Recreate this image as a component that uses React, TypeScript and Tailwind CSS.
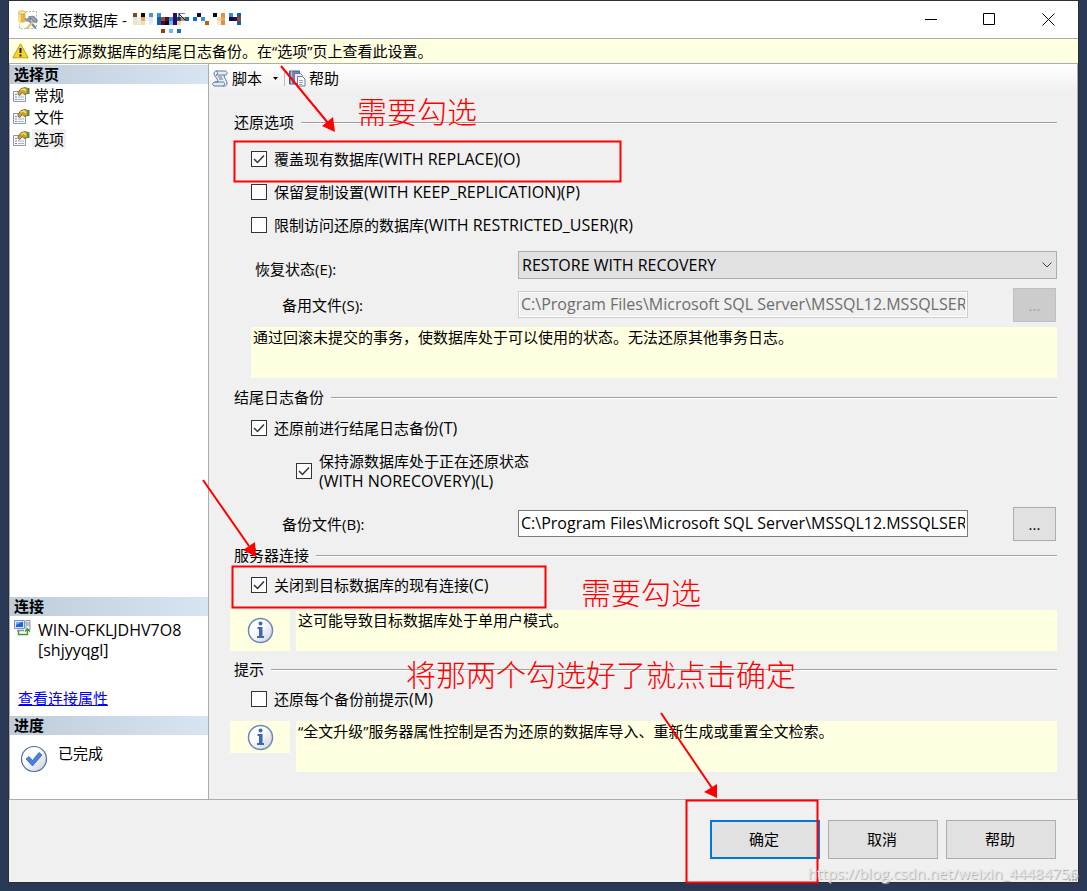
import type { ReactNode } from "react";

const FILE_PATH = "C:\\Program Files\\Microsoft SQL Server\\MSSQL12.MSSQLSERVER\\MSSQL\\Backup\\";

// [x, y, colour] in 4px cells
const MOSAIC: [number, number, string][] = [
  [0, 0, "#8a4510"], [2, 0, "#0a0a0a"], [4, 0, "#4a94dc"], [0, 1, "#c8ecec"], [1, 1, "#f4f0e4"], [2, 1, "#e9a35c"],
  [3, 1, "#f0f3f5"], [4, 1, "#dfe6ea"], [0, 2, "#fbe3a8"], [1, 2, "#dceaf4"], [2, 2, "#f9dca0"], [4, 2, "#e6eef5"],
  [6, 0, "#3390e0"], [6, 1, "#0d5fb5"], [7, 1, "#a34e10"], [8, 1, "#5c0a3a"], [9, 1, "#3390e0"],
  [6, 2, "#0d5fb5"], [7, 2, "#4a0a3c"], [8, 2, "#0a0a0a"], [9, 2, "#6bb8f5"],
  [10, 0, "#2d0a6b"], [10, 1, "#300a60"], [11, 1, "#0d5fb5"], [12, 1, "#e08f3c"], [13, 1, "#0d6cc4"], [10, 2, "#2d0a5c"],
  [11, 2, "#f3d6a5"], [7, 4, "#8a4510"], [9, 4, "#6bb8f5"], [11, 4, "#1f6fbb"], [16, 0, "#0a0a50"], [15, 1, "#0d6cc4"],
  [17, 1, "#3390e0"], [18, 2, "#b8650a"], [20, 0, "#0a0a0a"], [21, 1, "#f3d6a5"], [22, 0, "#d9924a"], [22, 1, "#e9a35c"],
  [22, 2, "#d98f45"], [21, 2, "#f8ead0"], [24, 0, "#3390e0"], [24, 1, "#0a0a50"], [25, 1, "#2d0a5c"], [26, 0, "#0d5fb5"],
  [26, 1, "#a34e10"], [26, 2, "#0d5fb5"],
];

function DatabaseToolsIcon() {
  return (
    <svg width="20" height="20" viewBox="0 0 20 20">
      <path d="M7.5 1.5h11v17h-17v-5" fill="none" stroke="#8fd07f" strokeDasharray="2 1.5" />
      <path d="M.5 3v8c0 2.2 7 2.2 7 0V3" fill="#e5b83b" />
      <path d="M.5 3v8c0 .8 1 1.4 2.4 1.6V3z" fill="#f8e08a" />
      <ellipse cx="4" cy="2.5" rx="3.5" ry="1.7" fill="#fbeaa6" stroke="#c39a2d" strokeWidth=".7" />
      <path d="M10 9l7 8.5" stroke="#7c8a9e" strokeWidth="2.4" strokeLinecap="round" />
      <path d="M7.5 8c0 3.500 3 3.500 4.500 1.500L11 6" fill="none" stroke="#8e99a9" strokeWidth="1.800" />
      <path d="M16 11l-7 7" stroke="#e3c57a" strokeWidth="2.400" strokeLinecap="round" />
      <path d="M12 7c3-2 5.500 0 7.500 4l-2.500 1.500L12.500 9z" fill="#95a3b6" stroke="#55647a" strokeWidth=".8" />
    </svg>
  );
}

function WarningIcon() {
  return (
    <svg width="17" height="16" viewBox="0 0 17 16">
      <path d="M8.5.8L16.200 14.800H.8z" fill="#f8d22e" stroke="#c99a13" strokeLinejoin="round" />
      <path d="M8.500 5v5M8.500 11.500v2" stroke="#222" strokeWidth="2" />
    </svg>
  );
}

function PageIcon() {
  return (
    <svg width="17" height="16" viewBox="0 0 17 16">
      <path d="M.5 4.500h12v10H.5z" fill="#f7f9fc" stroke="#8b98ad" />
      <path d="M2 7.500h2M2 10h2M2 12.500h2" stroke="#6d88bb" strokeWidth="1.200" />
      <path d="M5 10h6M5 12.500h6" stroke="#aab5c6" />
      <path d="M5 5.500l3-4 4-1 3 1v5l-4 1-2-2-2 3-2-1z" fill="#c9a32d" stroke="#6f5512" strokeWidth=".7" />
      <path d="M8 3l3-1 2 2" fill="none" stroke="#f7e58f" strokeWidth="1.300" />
      <path d="M14.500 1h2v6h-2z" fill="#47934b" />
    </svg>
  );
}

function ScriptIcon() {
  return (
    <svg width="17" height="17" viewBox="0 0 17 17">
      <path d="M4 1h9c2 0 3 3 1 4h-2c0 3 3 6 3 8 0 3-2 3-3 3H3c-3 0-3-4 0-4h3C6 9 3 7 2 4c0-2 1-3 2-3z" fill="#e4ecf7" stroke="#62779c" />
      <path d="M4 1c2 0 2 4 0 4h8M3 12h8c2 0 2 4 0 4M6 7h4M7 9h4" fill="none" stroke="#62779c" />
    </svg>
  );
}

function HelpBookIcon() {
  return (
    <svg width="17" height="17" viewBox="0 0 17 17">
      <path d="M.5 1h10v13H.5z" fill="#7783b8" stroke="#4d5788" />
      <path d="M2.500 1v13" stroke="#b6bfe2" />
      <path d="M5.500 3.500h6l2 2v8h-8z" fill="#e9eff8" stroke="#667aa2" />
      <path d="M8.500 6.500h5l2.500 2.500v7H8.500z" fill="#fff" stroke="#667aa2" />
      <path d="M10 10.500h4M10 12.500h4M10 14.500h3" stroke="#94a5c4" />
    </svg>
  );
}

function ServerIcon() {
  return (
    <svg width="17" height="16" viewBox="0 0 17 16">
      <path d="M.5.5h10v8H.5z" fill="#d9e4f2" stroke="#7e93b5" />
      <path d="M2 2h7v5H2z" fill="#1f62dc" />
      <path d="M2 2h6L2 5z" fill="#75a9fa" />
      <path d="M3 10.500h7" stroke="#7e8ea6" strokeWidth="1.500" />
      <path d="M12 .5h4v9h-4z" fill="#e6ebf3" stroke="#8b97ab" />
      <path d="M12.500 3h3M12.500 5h3" stroke="#8b97ab" />
      <path d="M4.500 11v3.500h9V9.500M11 11.500l2.500-2.500 2.500 2.500" fill="none" stroke="#3d9a27" strokeWidth="1.400" />
    </svg>
  );
}

function DoneIcon() {
  return (
    <svg width="28" height="28" viewBox="0 0 28 28">
      <defs>
        <linearGradient id="done" x1="0" y1="0" x2="1" y2="1">
          <stop offset=".4" stopColor="#fff" />
          <stop offset="1" stopColor="#c5cad3" />
        </linearGradient>
      </defs>
      <circle cx="14" cy="14" r="12.500" fill="url(#done)" stroke="#4e6b9e" strokeWidth="1.200" />
      <path d="M6 14l3-2.500 3.500 4L19 7.500l3 2.500-9.500 11z" fill="#4a80e4" stroke="#2a57b4" strokeWidth=".7" />
    </svg>
  );
}

function InfoIcon() {
  return (
    <svg width="27" height="27" viewBox="0 0 27 27">
      <defs>
        <linearGradient id="info" x1="0" y1="0" x2="1" y2="1">
          <stop offset=".4" stopColor="#fff" />
          <stop offset="1" stopColor="#c9ced8" />
        </linearGradient>
      </defs>
      <circle cx="13.500" cy="13.500" r="12" fill="url(#info)" stroke="#6c87b8" strokeWidth="1.500" />
      <circle cx="13.500" cy="6.500" r="2" fill="#3f66b5" />
      <path d="M10.500 10h5v9h1.500v2h-7v-2h2v-7h-1.500z" fill="#3f66b5" />
    </svg>
  );
}

// Latin runs sit one size up so they look level with the Chinese text
function Latin({ children }: { children: ReactNode }) {
  return <span className="text-[16px]">{children}</span>;
}

function PanelTitle({ children }: { children: ReactNode }) {
  return (
    <h2 className="flex h-[19px] shrink-0 items-center bg-linear-to-r from-[#bfcddb] to-[#d7e4f2] pb-[2px] pl-1 font-bold">{children}</h2>
  );
}

function GroupTitle({ children }: { children: ReactNode }) {
  return (
    <h3 className="flex items-center gap-[7px] pl-[25px]">
      {children}
      <span className="mt-[2px] h-[2px] flex-1 border-t border-[#a0a0a0] bg-white" />
    </h3>
  );
}

function CheckRow({ id, checked, children }: { id: string; checked?: boolean; children: ReactNode }) {
  return (
    <div className="flex items-center gap-[7px]">
      <span className="grid size-4 shrink-0">
        <input
          id={id}
          type="checkbox"
          defaultChecked={checked}
          className="peer col-start-1 row-start-1 size-4 appearance-none border border-[#333] bg-white"
        />
        <svg viewBox="0 0 16 16" className="pointer-events-none invisible col-start-1 row-start-1 size-4 peer-checked:visible">
          <path d="M3 8l3.500 3.500L13 4.500" fill="none" stroke="#333" strokeWidth="1.500" />
        </svg>
      </span>
      <label htmlFor={id}>{children}</label>
    </div>
  );
}

function FileRow({ id, label, disabled }: { id: string; label: string; disabled?: boolean }) {
  return (
    <div className="flex h-[34px] items-center">
      <label htmlFor={id} className="w-[309px] shrink-0 pl-[73px]">{label}</label>
      <input
        id={id}
        disabled={disabled}
        defaultValue={FILE_PATH}
        className="mb-[2px] h-[27px] min-w-0 flex-1 border border-[#7a7a7a] bg-white px-[2px] text-[16px] disabled:border-[#ccc] disabled:bg-[#f0f0f0] disabled:text-[#6d6d6d] disabled:inset-ring disabled:inset-ring-white"
      />
      <button
        disabled={disabled}
        aria-label={label + " …"}
        className="ml-[45px] h-[34px] w-[43px] border border-[#adadad] bg-[#e1e1e1] disabled:border-[#bfbfbf] disabled:bg-[#ccc] disabled:text-[#a0a0a0]"
      >
        ...
      </button>
      <span className="w-px" />
    </div>
  );
}

function InfoNote({ iconClass, textClass, children }: { iconClass: string; textClass: string; children: ReactNode }) {
  return (
    <div className="flex items-start gap-[6px] pl-[21px]">
      <div className={"flex w-[60px] shrink-0 items-center justify-center bg-[#ffffe1] " + iconClass}>
        <InfoIcon />
      </div>
      <p className={"flex-1 bg-[#ffffe1] px-[2px] " + textClass}>{children}</p>
    </div>
  );
}

// red marker boxes, arrows and notes drawn over the dialog
function Annotations() {
  return (
    <svg className="pointer-events-none absolute top-0 left-0" width="1087" height="891" viewBox="0 0 1087 891">
      <g fill="none" stroke="#f00" strokeWidth="2">
        <path d="M234.500 141.500h386v40h-386zM232.500 566.500h313v41h-313zM686.500 800.500h131v82h-131z" />
        <path d="M281 66l47 57M203 480l46 66M661 713l51 75" />
      </g>
      <g fill="#f00">
        <path d="M335 132l-13-6 11-9zM256 557l-13-7 12-8zM717 798l-13-6 13-8z" />
        <g className="font-['Noto_Sans_CJK_SC',sans-serif] text-[30px] font-light">
          <text x="357" y="123">需要勾选</text>
          <text x="581" y="604">需要勾选</text>
          <text x="406" y="686">将那两个勾选好了就点击确定</text>
        </g>
      </g>
    </svg>
  );
}

export default function App() {
  return (
    <div className="relative flex min-h-screen flex-col bg-[#293955] px-2 pb-2 font-['Open_Sans','Noto_Sans_CJK_SC',sans-serif] text-[15px] leading-5 text-black">
      <main className="flex flex-1 flex-col border border-[#2b2d3b] bg-[#f0f0f0]">
        <header className="flex h-[37px] items-center bg-white pl-[9px]">
          <DatabaseToolsIcon />
          <h1 className="ml-[5px]">还原数据库 -</h1>
          <svg width="110" height="22" viewBox="0 0 110 22" className="mt-2 ml-[6px]">
            {MOSAIC.map(([x, y, color]) => (
              <rect key={x + "-" + y} x={x * 4} y={y * 4} width="4" height="4" fill={color} />
            ))}
            <path d="M46 7V0h6M46 1l6 6" fill="none" stroke="#111" />
          </svg>
          <div className="ml-auto flex">
            <button aria-label="最小化" className="flex h-9 w-[58px] items-center justify-center">
              <svg width="13" height="13"><path d="M0 6.500h12" stroke="#000" /></svg>
            </button>
            <button aria-label="最大化" className="flex h-9 w-[58px] items-center justify-center">
              <svg width="13" height="13"><path d="M.5.5h11v11H.5z" fill="none" stroke="#000" /></svg>
            </button>
            <button aria-label="关闭" className="flex h-9 w-[60px] items-center justify-center">
              <svg width="13" height="13"><path d="M.5.5l12 12M12.500.5l-12 12" stroke="#000" /></svg>
            </button>
          </div>
        </header>

        <p className="flex h-[26px] items-center gap-[3px] border-y border-[#acacac] bg-[#ffffe1] pl-[3px]">
          <WarningIcon />
          <span>将进行源数据库的结尾日志备份。在“选项”页上查看此设置。</span>
        </p>

        <div className="flex flex-1 border-r border-b border-[#acacac]">
          <aside className="flex w-[200px] shrink-0 flex-col border-x border-[#acacac] bg-white pt-px">
            <PanelTitle>选择页</PanelTitle>
            <nav className="flex flex-col">
              {["常规", "文件", "选项"].map((name) => (
                <a key={name} href="#" className="flex h-[22px] items-center gap-[2px] pl-[3px]">
                  <PageIcon />
                  <span className={name === "选项" ? "bg-[#f0f0f0] px-[2px]" : "px-[2px]"}>{name}</span>
                </a>
              ))}
            </nav>
            <div className="flex-1" />
            <PanelTitle>连接</PanelTitle>
            <div className="flex h-[100px] flex-col justify-between pt-1 pb-2">
              <div className="flex gap-[7px] pl-1">
                <ServerIcon />
                <p className="text-[16px]">WIN-OFKLJDHV7O8<br />[shjyyqgl]</p>
              </div>
              <a href="#" className="pl-2 text-[#00f] underline">查看连接属性</a>
            </div>
            <PanelTitle>进度</PanelTitle>
            <div className="flex h-16 gap-[10px] pt-2 pl-[10px]">
              <span className="pt-[2px]"><DoneIcon /></span>
              <span>已完成</span>
            </div>
          </aside>

          <section className="flex min-w-0 flex-1 flex-col">
            <div className="flex h-7 items-center bg-linear-to-b from-white to-[#f0f0f0] pl-[3px]">
              <button className="flex items-center gap-[3px]">
                <ScriptIcon />
                脚本
                <svg width="5" height="3" className="ml-2"><path d="M0 0h5L2.500 3z" /></svg>
              </button>
              <span className="ml-[6px] h-4 w-px bg-[#bdbdbd]" />
              <button className="ml-1 flex items-center gap-[3px]">
                <HelpBookIcon />
                帮助
              </button>
            </div>

            <form className="flex flex-col pt-5 pr-5 pb-[27px]">
              <GroupTitle>还原选项</GroupTitle>
              <div className="mt-[17px] flex flex-col gap-[13px] pl-[42px]">
                <CheckRow id="replace" checked>覆盖现有数据库<Latin>(WITH REPLACE)(O)</Latin></CheckRow>
                <CheckRow id="keep">保留复制设置<Latin>(WITH KEEP_REPLICATION)(P)</Latin></CheckRow>
                <CheckRow id="restricted">限制访问还原的数据库<Latin>(WITH RESTRICTED_USER)(R)</Latin></CheckRow>
              </div>
              <div className="mt-4 flex items-center">
                <label htmlFor="state" className="w-[309px] shrink-0 pt-2 pl-[46px]">恢复状态(E):</label>
                <div className="grid flex-1">
                  <select id="state" className="col-start-1 row-start-1 h-7 appearance-none border border-[#adadad] bg-[#e1e1e1] px-[3px] text-[16px]">
                    <option>RESTORE WITH RECOVERY</option>
                  </select>
                  <svg width="10" height="6" className="pointer-events-none col-start-1 row-start-1 mr-[5px] self-center justify-self-end">
                    <path d="M.5.5L5 5 9.500.5" fill="none" stroke="#444" />
                  </svg>
                </div>
              </div>
              <div className="mt-[9px]"><FileRow id="standby" label="备用文件(S):" disabled /></div>
              <p className="mt-[5px] ml-[42px] h-[51px] bg-[#ffffe1] px-[2px]">
                通过回滚未提交的事务，使数据库处于可以使用的状态。无法还原其他事务日志。
              </p>

              <div className="mt-[9px]"><GroupTitle>结尾日志备份</GroupTitle></div>
              <div className="mt-[11px] pl-[42px]"><CheckRow id="tail" checked>还原前进行结尾日志备份<Latin>(T)</Latin></CheckRow></div>
              <div className="mt-[13px] pl-[87px]">
                <CheckRow id="norecovery" checked>保持源数据库处于正在还原状态<br /><Latin>(WITH NORECOVERY)(L)</Latin></CheckRow>
              </div>
              <div className="mt-4"><FileRow id="backup" label="备份文件(B):" /></div>

              <div className="mt-1"><GroupTitle>服务器连接</GroupTitle></div>
              <div className="mt-[10px] pl-[42px]"><CheckRow id="close" checked>关闭到目标数据库的现有连接<Latin>(C)</Latin></CheckRow></div>
              <div className="mt-[15px]">
                <InfoNote iconClass="h-[41px]" textClass="h-[41px]">这可能导致目标数据库处于单用户模式。</InfoNote>
              </div>

              <div className="mt-2"><GroupTitle>提示</GroupTitle></div>
              <div className="mt-[10px] pl-[42px]"><CheckRow id="prompt">还原每个备份前提示<Latin>(M)</Latin></CheckRow></div>
              <div className="mt-3">
                <InfoNote iconClass="h-8" textClass="h-[51px]">“全文升级”服务器属性控制是否为还原的数据库导入、重新生成或重置全文检索。</InfoNote>
              </div>
            </form>
          </section>
        </div>

        <footer className="flex h-[82px] items-start justify-end gap-2 pt-5 pr-[22px]">
          <button className="h-[39px] w-[110px] border-2 border-[#0078d7] bg-[#e1e1e1] pr-[2px] pb-[2px]">确定</button>
          <button className="h-[39px] w-[110px] border border-[#adadad] bg-[#e1e1e1] pr-[2px] pb-[2px]">取消</button>
          <button className="h-[39px] w-[110px] border border-[#adadad] bg-[#e1e1e1] pr-[2px] pb-[2px]">帮助</button>
        </footer>
      </main>
      <Annotations />
      {/* resize grip */}
      <svg className="pointer-events-none absolute right-[9px] bottom-[9px]" width="9" height="9" fill="#b4b4b4">
        <path d="M6 0h2v2H6zM3 3h2v2H3zM6 3h2v2H6zM0 6h2v2H0zM3 6h2v2H3zM6 6h2v2H6z" />
      </svg>
      <span className="pointer-events-none absolute right-[9px] bottom-2 text-[15px] text-[#e8e8e8] [text-shadow:1px_1px_1px_#aaa]">
        https://blog.csdn.net/weixin_44484756
      </span>
    </div>
  );
}
